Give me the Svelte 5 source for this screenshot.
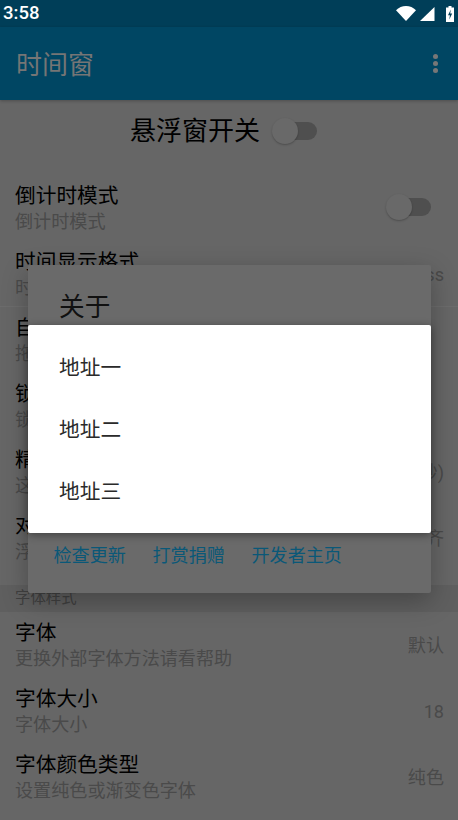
<script>
  const groupA = [
    { title: '自动贴边', sub: '拖动后自动贴边' },
    { title: '锁定悬浮窗', sub: '锁定后无法拖动' },
    { title: '精确显示', sub: '这会增加耗电', value: '(秒)' },
    { title: '对齐方式', sub: '浮窗文字对齐方式', value: '左对齐' }
  ];
  const groupB = [
    { title: '字体', sub: '更换外部字体方法请看帮助', value: '默认' },
    { title: '字体大小', sub: '字体大小', value: '18' },
    { title: '字体颜色类型', sub: '设置纯色或渐变色字体', value: '纯色' }
  ];
  const addresses = ['地址一', '地址二', '地址三'];
  const actions = ['检查更新', '打赏捐赠', '开发者主页'];
</script>

<div class="screen">
  <div class="status">
    <span class="clock">3:58</span>
    <div class="status-icons">
      <svg width="20" height="15" viewBox="0 0 20 15"><path d="M0 4.2C2.8 1.6 6.2 0 10 0s7.2 1.6 10 4.2L10 15z" fill="#fff"/></svg>
      <svg width="15" height="14" viewBox="0 0 15 14"><path d="M0 14L14.5 0v14z" fill="#fff"/></svg>
      <svg width="8" height="16" viewBox="0 0 8 16"><path d="M2.5 0h3v1.6H8V16H0V1.6h2.5z" fill="#fff"/><path d="M4.8 3.6L2 9.2h1.9l-.6 4.4 2.9-6.2H4.2z" fill="#003e58"/></svg>
    </div>
  </div>

  <header class="toolbar">
    <span class="app-title">时间窗</span>
    <div class="menu"><i></i><i></i><i></i></div>
  </header>

  <div class="master">
    <span class="master-label">悬浮窗开关</span>
    <div class="switch master-switch"><b></b></div>
  </div>

  <div class="row">
    <div class="texts"><div class="title">倒计时模式</div><div class="sub">倒计时模式</div></div>
    <div class="switch row-switch"><b></b></div>
  </div>
  <div class="row divided">
    <div class="texts"><div class="title">时间显示格式</div><div class="sub">时间显示格式</div></div>
    <span class="value">HH:mm:ss</span>
  </div>

  <div class="group">
    {#each groupA as r}
      <div class="row">
        <div class="texts"><div class="title">{r.title}</div><div class="sub">{r.sub}</div></div>
        {#if r.value}<span class="value">{r.value}</span>{/if}
      </div>
    {/each}
  </div>

  <div class="section">字体样式</div>

  {#each groupB as r}
    <div class="row">
      <div class="texts"><div class="title">{r.title}</div><div class="sub">{r.sub}</div></div>
      <span class="value">{r.value}</span>
    </div>
  {/each}

  <div class="overlay">
    <div class="about">
      <div class="about-title">关于</div>
      <div class="actions">
        {#each actions as a}<span class="action">{a}</span>{/each}
      </div>
      <div class="list">
        {#each addresses as a}<div class="item">{a}</div>{/each}
      </div>
    </div>
  </div>
</div>

<style>
  :global(body) {
    margin: 0;
    background: #666;
  }
  .screen {
    position: relative;
    width: 458px;
    height: 820px;
    overflow: hidden;
    background: #666;
    font-family: Roboto, "Noto Sans CJK SC", sans-serif;
  }
  .status {
    height: 27px;
    background: #003e58;
    display: flex;
    align-items: center;
    justify-content: space-between;
    padding: 0 4px 0 3px;
    box-sizing: border-box;
  }
  .clock {
    color: #fff;
    font-size: 18.5px;
    font-weight: 500;
    line-height: 25px;
  }
  .status-icons {
    display: flex;
    align-items: center;
    gap: 4px;
  }
  .status-icons svg:nth-child(2) {
    margin-right: 7px;
  }
  .toolbar {
    height: 73px;
    background: #004663;
    display: flex;
    align-items: center;
    justify-content: space-between;
    padding: 0 20px 0 16px;
    box-shadow: 0 1px 3px rgba(0, 0, 0, 0.25);
    position: relative;
  }
  .app-title {
    font-size: 26px;
    color: #757575;
    line-height: 34px;
    margin-top: 2px;
  }
  .menu {
    display: flex;
    flex-direction: column;
    gap: 2px;
  }
  .menu i {
    display: block;
    width: 5px;
    height: 5px;
    border-radius: 50%;
    background: #777;
  }
  .master {
    height: 62px;
    margin-bottom: 13px;
    display: flex;
    align-items: center;
    justify-content: center;
    padding-right: 11px;
  }
  .master-label {
    font-size: 26px;
    color: #000;
    line-height: 34px;
  }
  .switch {
    position: relative;
    width: 45px;
    height: 18px;
  }
  .switch::before {
    content: "";
    position: absolute;
    left: 4px;
    right: 0;
    top: 0;
    bottom: 0;
    border-radius: 9px;
    background: #4f4f4f;
  }
  .switch b {
    position: absolute;
    left: 0;
    top: -4px;
    width: 26px;
    height: 26px;
    border-radius: 50%;
    background: #696969;
    box-shadow: 0 1px 2px rgba(0, 0, 0, 0.25);
  }
  .master-switch {
    margin-left: 12px;
  }
  .row-switch {
    margin-right: 13px;
    margin-bottom: 4px;
  }
  .row {
    height: 66px;
    box-sizing: border-box;
    padding: 8px 14px 6px 15px;
    display: flex;
    align-items: center;
    justify-content: space-between;
  }
  .divided {
    border-bottom: 1px solid #6c6c6c;
  }
  .texts {
    display: flex;
    flex-direction: column;
  }
  .title {
    font-size: 20.7px;
    line-height: 26px;
    color: #000;
  }
  .sub {
    font-size: 18.1px;
    line-height: 26px;
    color: #4a4a4a;
  }
  .value {
    font-size: 18.1px;
    line-height: 26px;
    color: #4a4a4a;
  }
  .group {
    padding-bottom: 14px;
  }
  .section {
    height: 27px;
    background: #5f5f5f;
    padding: 0 15px;
    font-size: 15.4px;
    line-height: 27px;
    color: #404040;
  }
  .overlay {
    position: absolute;
    inset: 0;
    padding: 265px 27px 0 28px;
  }
  .about {
    position: relative;
    height: 328px;
    display: flex;
    flex-direction: column;
    background: #6a6a6a;
    border-radius: 2px;
    box-shadow: 0 8px 26px rgba(0, 0, 0, 0.28);
  }
  .about-title {
    padding: 25px 0 0 31px;
    font-size: 25.7px;
    line-height: 34px;
    color: #111;
  }
  .actions {
    margin-top: auto;
    margin-bottom: 18px;
    padding-left: 25.5px;
    display: flex;
    gap: 26.6px;
  }
  .action {
    font-size: 18.1px;
    line-height: 38px;
    color: #0a5878;
  }
  .list {
    position: absolute;
    left: 0;
    right: 0;
    top: 60px;
    background: #fff;
    border-radius: 2px;
    padding: 12px 0 10px;
    box-shadow: 0 2px 8px rgba(0, 0, 0, 0.4);
  }
  .item {
    height: 62px;
    padding-left: 31px;
    font-size: 20.7px;
    line-height: 62px;
    color: #2a2a2a;
  }
</style>
